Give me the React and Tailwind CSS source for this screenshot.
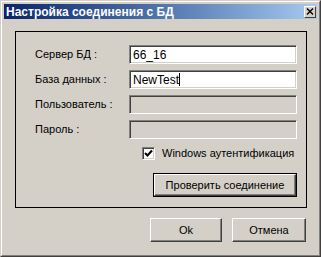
import React from "react";

const font = { fontFamily: '"Liberation Sans", Arial, sans-serif' };

const Field = ({ label, value, enabled, caret }) => (
  <div className="flex items-center h-[19px]">
    <div className="w-[94px] text-[11px] text-black leading-none whitespace-nowrap">{label}</div>
    <div
      className={`w-[168px] h-[19px] border border-t-[#808080] border-l-[#808080] border-b-white border-r-white shadow-[inset_1px_1px_0_#404040,inset_-1px_-1px_0_#d4d0c8] flex items-center pl-[3px] text-[12px] text-black ${
        enabled ? "bg-white" : "bg-[#d4d0c8]"
      }`}
    >
      {value}
      {caret && <span className="w-px h-[13px] bg-black"></span>}
    </div>
  </div>
);

const Button = ({ children, className = "", isDefault }) => (
  <div className={`${isDefault ? "border border-black" : ""} ${className}`}>
    <div className="w-full h-full border border-t-white border-l-white border-b-[#404040] border-r-[#404040] shadow-[inset_-1px_-1px_0_#808080] flex items-center justify-center text-[11px] text-black whitespace-nowrap">
      {children}
    </div>
  </div>
);

export default function App() {
  return (
    <div
      style={font}
      className="w-[321px] h-[257px] bg-[#d4d0c8] border border-t-[#d4d0c8] border-l-[#d4d0c8] border-b-[#404040] border-r-[#404040]"
    >
      <div className="w-full h-full border border-t-white border-l-white border-b-[#808080] border-r-[#808080] p-[2px] flex flex-col">
        <div className="h-[15px] bg-linear-to-r from-[#0a246a] to-[#a6caf0] flex items-center justify-between pl-[2px] pr-[1px]">
          <span className="text-white font-bold text-[12px] leading-none">
            Настройка соединения с БД
          </span>
          <div className="w-[12px] h-[12px] bg-[#d4d0c8] border border-t-white border-l-white border-b-[#404040] border-r-[#404040] flex items-center justify-center">
            <svg width="8" height="7" viewBox="0 0 8 7">
              <path d="M1 0.5 L7 6.5 M7 0.5 L1 6.5" stroke="#000" strokeWidth="1.4" />
            </svg>
          </div>
        </div>

        <div className="ml-[11px] mt-[12px] w-[292px] h-[177px] border border-black pt-[13px] pl-[19px] flex flex-col">
          <div className="flex flex-col gap-[6px]">
            <Field label="Сервер БД :" value="66_16" enabled />
            <Field label="База данных :" value="NewTest" enabled caret />
            <Field label="Пользователь :" value="" />
            <Field label="Пароль :" value="" />
          </div>
          <div className="flex items-center mt-[8px] ml-[107px] h-[13px]">
            <div className="w-[13px] h-[13px] bg-white border border-t-[#808080] border-l-[#808080] border-b-white border-r-white shadow-[inset_1px_1px_0_#404040,inset_-1px_-1px_0_#d4d0c8] flex items-center justify-center">
              <svg width="9" height="9" viewBox="0 0 9 9">
                <path d="M1 4 L3.5 6.5 L8 1.5" stroke="#000" strokeWidth="2" fill="none" />
              </svg>
            </div>
            <span className="ml-[7px] text-[11px] text-black whitespace-nowrap">Windows аутентификация</span>
          </div>
          <Button isDefault className="mt-[13px] ml-[118px] w-[144px] h-[24px]">
            Проверить соединение
          </Button>
        </div>

        <div className="flex justify-end gap-[10px] mt-[10px] pr-[11px]">
          <Button className="w-[72px] h-[24px]">Ok</Button>
          <Button className="w-[74px] h-[24px]">Отмена</Button>
        </div>
      </div>
    </div>
  );
}
